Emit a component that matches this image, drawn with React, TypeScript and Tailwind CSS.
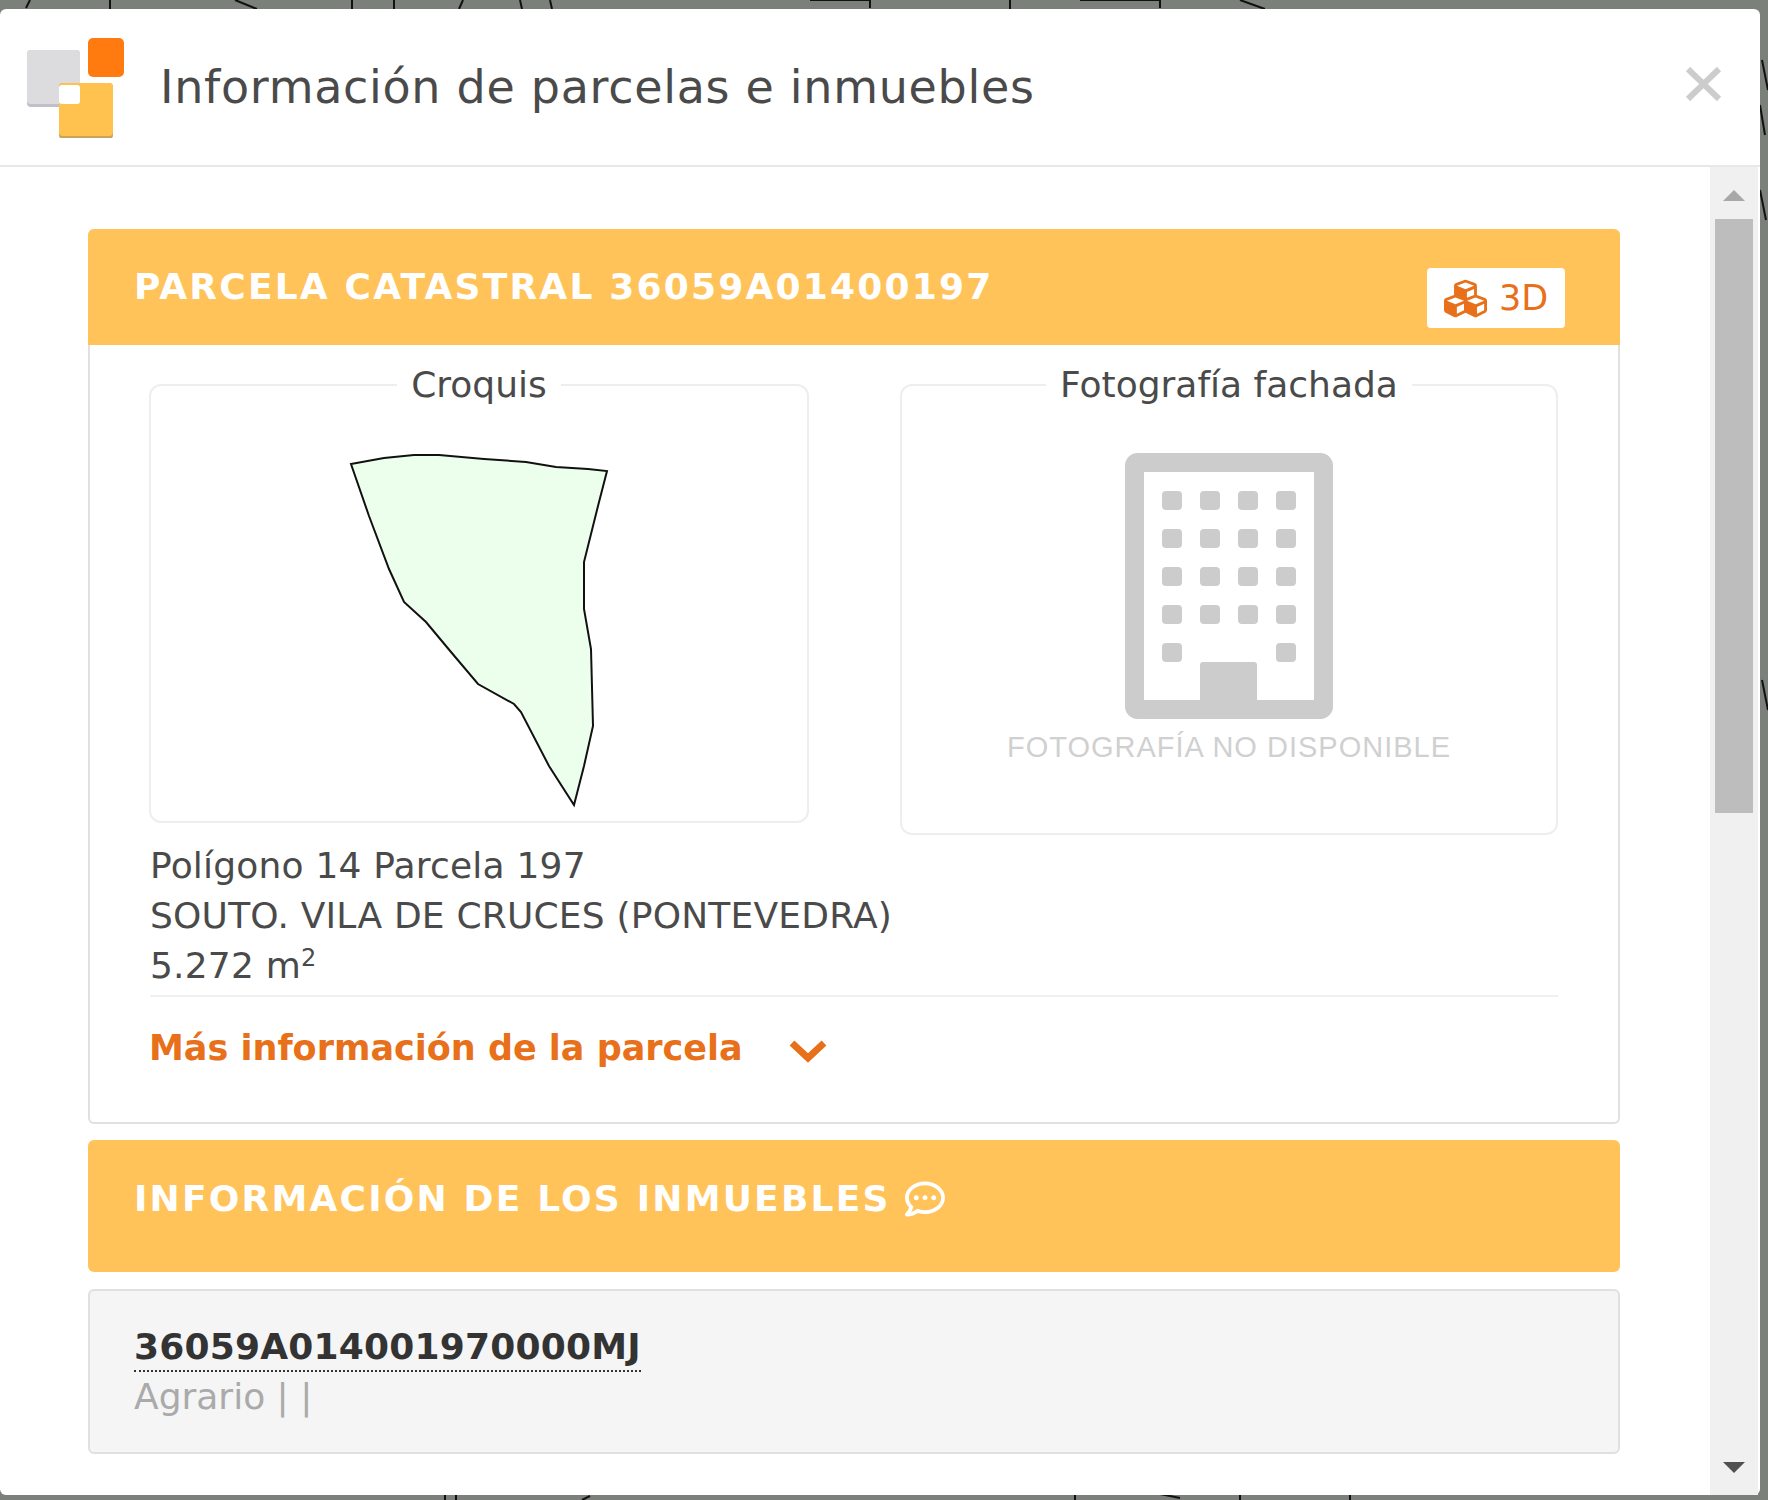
import { FaCubes, FaRegCommentDots } from "react-icons/fa";

const polygon =
  "350,465 383,459 413,456 438,456 483,460 525,463 555,468 587,470 606,472 597,507 583,563 583,610 590,650 592,727 583,767 573,806 548,767 520,713 513,705 477,685 450,653 425,623 403,603 388,570 368,517";

function Logo() {
  return (
    <svg width="97" height="100" viewBox="0 0 97 100" className="ml-[27px] mt-[1px] shrink-0">
      <rect x="0" y="12" width="53" height="57" rx="4" fill="#bfc0c8" />
      <rect x="0" y="12" width="53" height="54" rx="4" fill="#dcdcdf" />
      <rect x="61" y="0" width="36" height="39" rx="5" fill="#ff7a0f" />
      <rect x="32" y="45" width="54" height="56" rx="4" fill="#c9a45a" />
      <rect x="32" y="45" width="54" height="53" rx="4" fill="#ffc24f" />
      <rect x="32" y="47" width="21" height="19" rx="3" fill="#ffffff" />
    </svg>
  );
}

function BuildingIcon() {
  const cols = [37, 75, 113, 151];
  const rows = [38, 76, 114, 152];
  return (
    <svg width="208" height="266" viewBox="0 0 208 266" className="mx-auto mt-[44px]">
      <rect x="9.5" y="9.5" width="189" height="247" rx="3" fill="none" stroke="#cccccc" strokeWidth="19" />
      {rows.map((y) =>
        cols.map((x) => <rect key={`${x}-${y}`} x={x} y={y} width="20" height="19" rx="4" fill="#cccccc" />),
      )}
      <rect x="37" y="190" width="20" height="19" rx="4" fill="#cccccc" />
      <rect x="151" y="190" width="20" height="19" rx="4" fill="#cccccc" />
      <rect x="75" y="209" width="57" height="50" rx="3" fill="#cccccc" />
    </svg>
  );
}

export default function App() {
  return (
    <div className="relative w-[1768px] h-[1500px] overflow-hidden bg-[#7b807b] pt-[9px] font-['DejaVu_Sans',sans-serif]">
      {/* map peeking out behind the dialog */}
      <svg className="absolute inset-0" width="1768" height="1500" fill="none" stroke="#111111" strokeWidth="2">
        <path d="M30 0l-4 8M110 0v9M235 0l22 9M352 0v9M394 0v9M463 0l-4 9M520 0l2 9M550 0l2 9M810 0h60v8M1010 0v9M1080 0h80v8M1240 0l25 9" />
        <path d="M1762 60l6 30M1760 105l5 30M1760 190l6 30M1762 680l6 30" />
        <path d="M445 1494v6M456 1494v6M590 1496l-8 4M1075 1494v6M1160 1494l20 4M1240 1494v6M1350 1494v6" />
      </svg>

      <div className="relative w-[1760px] h-[1486px] bg-white rounded-md flex flex-col">
        {/* header */}
        <div className="h-[158px] shrink-0 border-b-2 border-[#e8e8e8] flex items-center">
          <Logo />
          <h1 className="ml-[36px] text-[46px] leading-none tracking-[0.7px] text-[#4a4a4a] whitespace-nowrap">
            Información de parcelas e inmuebles
          </h1>
          <svg width="37" height="34" viewBox="0 0 37 34" className="ml-auto mr-[38px] -mt-[6px]" stroke="#cccccc" strokeWidth="6">
            <path d="M3 2l31 30M34 2L3 32" />
          </svg>
        </div>

        <div className="flex-1 flex min-h-0">
          <div className="flex-1 pl-[88px] pt-[62px] overflow-hidden">
            {/* parcela */}
            <div className="w-[1532px] border-x-2 border-b-2 border-[#e0e0e0] rounded-md bg-white">
              <div className="-mx-[2px] h-[116px] bg-[#ffc35a] rounded-t-md flex items-start justify-between pl-[46px] pr-[55px]">
                <h2 className="mt-[34px] text-[36px] leading-[48px] font-bold tracking-[2.2px] text-white whitespace-nowrap">
                  PARCELA CATASTRAL 36059A01400197
                </h2>
                <div className="mt-[39px] w-[138px] h-[60px] bg-white rounded-sm flex items-center justify-center gap-[12px] text-[#e8701a] text-[35px]">
                  <FaCubes size={43} />
                  <span>3D</span>
                </div>
              </div>

              <div className="pl-[59px] pr-[60px] pt-[16px] text-[#4a4a4a] text-[36px] leading-[48px]">
                <div className="grid grid-cols-[660px_658px] gap-x-[91px]">
                  <fieldset className="h-[462px] border-2 border-[#eeeeee] rounded-xl">
                    <legend className="mx-auto px-[14px]">Croquis</legend>
                    <svg width="656" height="351" viewBox="150 455 656 351" className="mt-[45px] overflow-visible">
                      <polygon points={polygon} fill="#ecffec" stroke="#111111" strokeWidth="2" />
                    </svg>
                  </fieldset>
                  <fieldset className="h-[474px] border-2 border-[#eeeeee] rounded-xl">
                    <legend className="mx-auto px-[14px]">Fotografía fachada</legend>
                    <BuildingIcon />
                    <div className="mt-[10px] text-center font-['Liberation_Sans',sans-serif] text-[#d0d0d0] text-[29px] leading-[36px] tracking-[1px] whitespace-nowrap">
                      FOTOGRAFÍA NO DISPONIBLE
                    </div>
                  </fieldset>
                </div>

                <div className="mt-[6px] ml-[1px] leading-[50px] tracking-[0.2px] whitespace-nowrap pb-[4px] border-b-2 border-[#f0f0f0]">
                  <div>Polígono 14 Parcela 197</div>
                  <div>SOUTO. VILA DE CRUCES (PONTEVEDRA)</div>
                  <div>
                    5.272 m<sup className="text-[24px]">2</sup>
                  </div>
                </div>

                <div className="h-[125px] pt-[27px] flex items-start text-[#e8701a] text-[35px] font-bold">
                  <span className="whitespace-nowrap">Más información de la parcela</span>
                  <svg width="38" height="24" viewBox="0 0 38 24" fill="none" stroke="#e8701a" strokeWidth="7" className="ml-[46px] mt-[15px]">
                    <path d="M3 4l16 15L35 4" />
                  </svg>
                </div>
              </div>
            </div>

            {/* inmuebles */}
            <div className="w-[1532px] mt-[16px] h-[132px] bg-[#ffc35a] rounded-md pl-[46px] pt-[35px]">
              <h2 className="flex items-center gap-[14px] text-[36px] leading-[48px] font-bold tracking-[2.2px] text-white whitespace-nowrap">
                INFORMACIÓN DE LOS INMUEBLES
                <FaRegCommentDots size={40} />
              </h2>
            </div>

            <div className="w-[1532px] mt-[17px] h-[165px] bg-[#f5f5f5] border-2 border-[#e0e0e0] rounded-md pl-[44px] pt-[31px] text-[36px] leading-[50px]">
              <div className="w-fit h-[50px] font-bold tracking-[0.2px] text-[#333333] border-b-2 border-dotted border-[#333333] whitespace-nowrap">
                36059A014001970000MJ
              </div>
              <div className="text-[#aaaaaa] whitespace-nowrap">Agrario | |</div>
            </div>
          </div>

          {/* scrollbar */}
          <div className="w-[48px] mr-[2px] shrink-0 bg-[#f0f0f0] flex flex-col items-center">
            <div className="mt-[23px] w-0 h-0 border-x-[11px] border-x-transparent border-b-[11px] border-b-[#a8a8a8]" />
            <div className="mt-[18px] w-[38px] h-[594px] bg-[#bdbdbd]" />
            <div className="mt-auto mb-[22px] w-0 h-0 border-x-[11px] border-x-transparent border-t-[11px] border-t-[#505050]" />
          </div>
        </div>
      </div>
    </div>
  );
}
